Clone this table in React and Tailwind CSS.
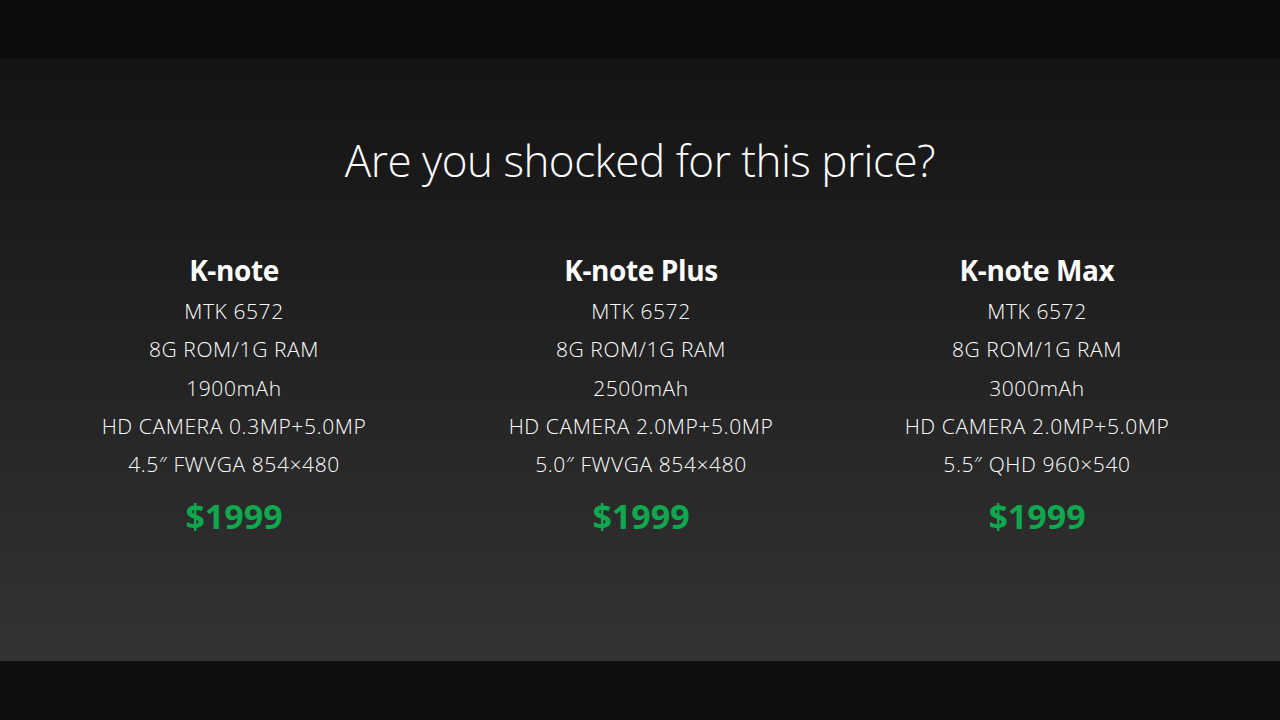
const phones = [
  {
    name: "K-note",
    specs: ["MTK 6572", "8G ROM/1G RAM", "1900mAh", "HD CAMERA 0.3MP+5.0MP", "4.5″ FWVGA 854×480"],
    price: "$1999",
    width: "w-[400px]",
  },
  {
    name: "K-note Plus",
    specs: ["MTK 6572", "8G ROM/1G RAM", "2500mAh", "HD CAMERA 2.0MP+5.0MP", "5.0″ FWVGA 854×480"],
    price: "$1999",
    width: "w-[414px]",
  },
  {
    name: "K-note Max",
    specs: ["MTK 6572", "8G ROM/1G RAM", "3000mAh", "HD CAMERA 2.0MP+5.0MP", "5.5″ QHD 960×540"],
    price: "$1999",
    width: "w-[378px]",
  },
];

export default function App() {
  return (
    <div className="w-[1280px] h-[720px] flex flex-col bg-[#0d0d0d] font-['Open_Sans',sans-serif] text-white overflow-hidden">
      <div className="h-[58px] bg-[#0d0d0d]" />

      {/* Slide */}
      <div className="h-[603px] flex flex-col bg-gradient-to-b from-[#141414] to-[#333333]">
        <h1 className="pt-[76px] text-center text-[44px] leading-[52px] font-light tracking-[-0.5px]">
          Are you shocked for this price?
        </h1>

        <div className="flex pl-[34px] pt-[65px]">
          {phones.map((p) => (
            <div key={p.name} className={`${p.width} flex flex-col items-center`}>
              <h2 className="text-[28px] leading-[38px] font-bold tracking-[-0.4px]">{p.name}</h2>
              <ul className="mt-[3px] flex flex-col items-center">
                {p.specs.map((s) => (
                  <li key={s} className="text-[21px] leading-[38.3px] font-light tracking-[0.6px]">
                    {s}
                  </li>
                ))}
              </ul>
              <div className="mt-[13px] text-[34px] leading-[40px] font-bold text-[#0fa84f]">{p.price}</div>
            </div>
          ))}
        </div>
      </div>

      <div className="flex-1 bg-[#0e0e0e]" />
    </div>
  );
}
